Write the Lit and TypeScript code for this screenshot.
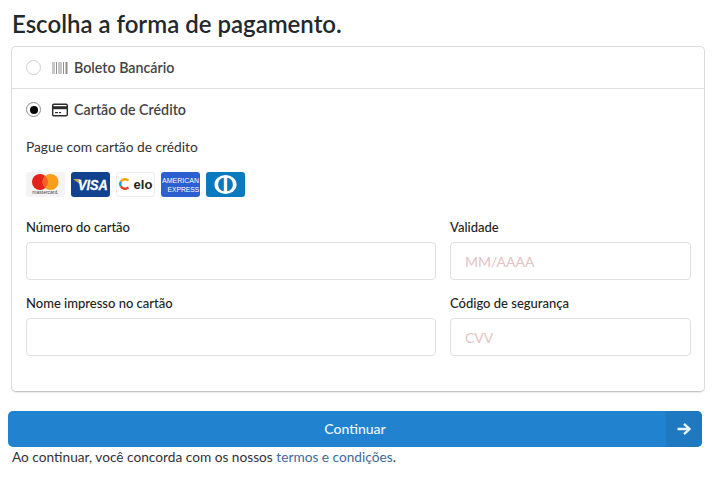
import { LitElement, html, css, svg } from 'lit';
import { customElement } from 'lit/decorators.js';

const barcodeIcon = html`<svg class="method-icon" width="16" height="14" viewBox="0 0 32 28">
  <g fill="#8f8f8f">
    <rect x="1" y="2" width="2" height="24"/><rect x="5" y="2" width="1" height="24"/>
    <rect x="8" y="2" width="2" height="24"/><rect x="12" y="2" width="1" height="24"/>
    <rect x="15" y="2" width="2" height="24"/><rect x="19" y="2" width="1" height="24"/>
    <rect x="22" y="2" width="2" height="24"/><rect x="26" y="2" width="1" height="24"/>
    <rect x="28" y="2" width="3" height="24"/>
  </g>
</svg>`;

const cardIcon = html`<svg class="method-icon" width="16" height="14" viewBox="0 0 16 14">
  <rect x="0.7" y="1.2" width="14.6" height="11.6" rx="1.2" fill="none" stroke="#2b2b2b" stroke-width="1.4"/>
  <rect x="1" y="3.2" width="14" height="3" fill="#2b2b2b"/>
  <rect x="3" y="9" width="3" height="1.2" fill="#2b2b2b"/>
  <rect x="7" y="9" width="2" height="1.2" fill="#2b2b2b"/>
</svg>`;

const mastercard = svg`<svg width="39" height="25" viewBox="0 0 39 25">
  <rect width="39" height="25" rx="3" fill="#f4f4f4"/>
  <circle cx="14" cy="10" r="8" fill="#e2231a"/>
  <circle cx="24.500" cy="10" r="8" fill="#f79e1b"/>
  <path d="M19.250 4a8 8 0 0 1 0 12a8 8 0 0 1 0-12z" fill="#f26122"/>
  <text x="19.500" y="22.400" text-anchor="middle" font-size="5" fill="#444">mastercard.</text>
</svg>`;

const visa = svg`<svg width="39" height="25" viewBox="0 0 39 25">
  <rect width="39" height="25" rx="3" fill="#12428f"/>
  <path d="M2 7h7l2.500 7z" fill="#c9a45a"/>
  <text transform="translate(7 18) scale(0.85 1)" font-size="15" font-weight="700" font-style="italic" fill="#fff" stroke="#fff" stroke-width="0.300">VISA</text>
</svg>`;

const elo = svg`<svg width="39" height="25" viewBox="0 0 39 25">
  <rect x="0.500" y="0.500" width="38" height="24" rx="3" fill="#fff" stroke="#ececec"/>
  <g fill="none" stroke-width="2.400">
    <path d="M12.400 8.600A4.800 4.800 0 0 0 4.840 9.600" stroke="#f5a800"/>
    <path d="M4.840 9.600A4.800 4.800 0 0 0 4.840 14.400" stroke="#00a4e0"/>
    <path d="M4.840 14.400A4.800 4.800 0 0 0 12.400 15.400" stroke="#e8412a"/>
  </g>
  <text x="27" y="16.500" text-anchor="middle" font-size="13" font-weight="700" fill="#222">elo</text>
</svg>`;

const amex = svg`<svg width="39" height="25" viewBox="0 0 39 25">
  <rect width="39" height="25" rx="3" fill="#2e5fd0"/>
  <text x="1" y="10.500" font-size="7" fill="#fff">AMERICAN</text>
  <text x="6.500" y="19.700" font-size="6.700" fill="#fff">EXPRESS</text>
</svg>`;

const diners = svg`<svg width="39" height="25" viewBox="0 0 39 25">
  <rect width="39" height="25" rx="3" fill="#0a79bd"/>
  <ellipse cx="19.500" cy="12.500" rx="11" ry="9.500" fill="#fff"/>
  <path d="M17.800 5.800a6.800 6.800 0 0 0 0 13.400z" fill="#0a79bd"/>
  <path d="M21.200 5.800a6.800 6.800 0 0 1 0 13.400z" fill="#0a79bd"/>
</svg>`;

@customElement('app-root')
export class AppRoot extends LitElement {
  static override styles = css`
    :host {
      display: block;
      width: 718px;
      height: 477px;
      box-sizing: border-box;
      padding: 9px 16px 0 8px;
      background: #fff;
      color: #2b2b2b;
      font-family: Lato, sans-serif;
    }

    h1 {
      margin: 0 0 8px 4px;
      height: 29px;
      font-size: 24px;
      line-height: 29px;
      font-weight: 600;
      color: #23282d;
    }

    .card {
      margin-left: 3px;
      margin-right: -3px;
      height: 346px;
      box-sizing: border-box;
      border: 1px solid #dcdcdc;
      border-bottom-color: #c8c8c8;
      border-radius: 5px;
      box-shadow: 0 1px 1px rgba(0, 0, 0, 0.08);
    }

    .method {
      display: flex;
      align-items: center;
      height: 41px;
      padding-left: 14px;
      font-size: 14.250px;
      font-weight: 600;
      color: #444;
    }

    .method.first {
      border-bottom: 1px solid #dedede;
    }

    .radio {
      width: 15px;
      height: 15px;
      box-sizing: border-box;
      border: 1px solid #cfcfcf;
      border-radius: 50%;
      margin-right: 11px;
      display: flex;
      align-items: center;
      justify-content: center;
      flex: none;
    }

    .radio.on {
      border-color: #8a8a8a;
    }

    .radio.on::after {
      content: '';
      width: 8px;
      height: 8px;
      border-radius: 50%;
      background: #000;
    }

    .method-icon {
      margin-right: 6px;
      flex: none;
    }

    .body {
      padding: 8px 14px 0;
    }

    .lead {
      margin: 0;
      font-size: 13.750px;
      line-height: 17px;
      color: #333;
    }

    .brands {
      display: flex;
      gap: 6px;
      margin: 17px 0 0;
      height: 25px;
      font-family: 'Liberation Sans', sans-serif;
    }

    .fields {
      display: grid;
      grid-template-columns: 410px 241px;
      column-gap: 14px;
      row-gap: 15px;
      margin-top: 22px;
    }

    label {
      display: block;
      font-size: 13px;
      line-height: 16px;
      font-weight: 500;
      color: #222;
      margin-bottom: 7px;
    }

    input {
      display: block;
      width: 100%;
      height: 38px;
      box-sizing: border-box;
      border: 1px solid #dfdfdf;
      border-radius: 4px;
      padding: 0 14px;
      background: #fff;
      font: 14px Lato, sans-serif;
      outline: none;
    }

    input::placeholder {
      color: #e2c4c4;
      opacity: 1;
    }

    .continue {
      position: relative;
      display: block;
      width: 694px;
      height: 36px;
      margin-top: 19px;
      border: none;
      border-radius: 5px;
      background: #2183d0;
      color: #eef6fc;
      font: 500 14px Lato, sans-serif;
      padding: 0 0 1px;
      overflow: hidden;
    }

    .continue .arrow {
      position: absolute;
      right: 0;
      top: 0;
      bottom: 0;
      width: 36px;
      background: #1f79c1;
      display: flex;
      align-items: center;
      justify-content: center;
    }

    .terms {
      margin: 1px 0 0 4px;
      font-size: 13.700px;
      line-height: 17px;
      color: #333;
    }

    .terms a {
      color: #3d6a9c;
      text-decoration: none;
    }
  `;

  override render() {
    return html`
      <h1>Escolha a forma de pagamento.</h1>
      <div class="card">
        <div class="method first">
          <span class="radio"></span>${barcodeIcon}<span>Boleto Bancário</span>
        </div>
        <div class="method">
          <span class="radio on"></span>${cardIcon}<span>Cartão de Crédito</span>
        </div>
        <div class="body">
          <p class="lead">Pague com cartão de crédito</p>
          <div class="brands">${mastercard}${visa}${elo}${amex}${diners}</div>
          <div class="fields">
            <div><label>Número do cartão</label><input type="text" /></div>
            <div><label>Validade</label><input type="text" placeholder="MM/AAAA" /></div>
            <div><label>Nome impresso no cartão</label><input type="text" /></div>
            <div><label>Código de segurança</label><input type="text" placeholder="CVV" /></div>
          </div>
        </div>
      </div>
      <button class="continue">
        Continuar
        <span class="arrow">
          <svg width="16" height="14" viewBox="0 0 16 14" fill="none" stroke="#e8f3fb" stroke-width="2.400">
            <path d="M1.500 7h12M8 1.800L13.500 7L8 12.200"/>
          </svg>
        </span>
      </button>
      <p class="terms">Ao continuar, você concorda com os nossos <a href="#">termos e condições</a>.</p>
    `;
  }
}
